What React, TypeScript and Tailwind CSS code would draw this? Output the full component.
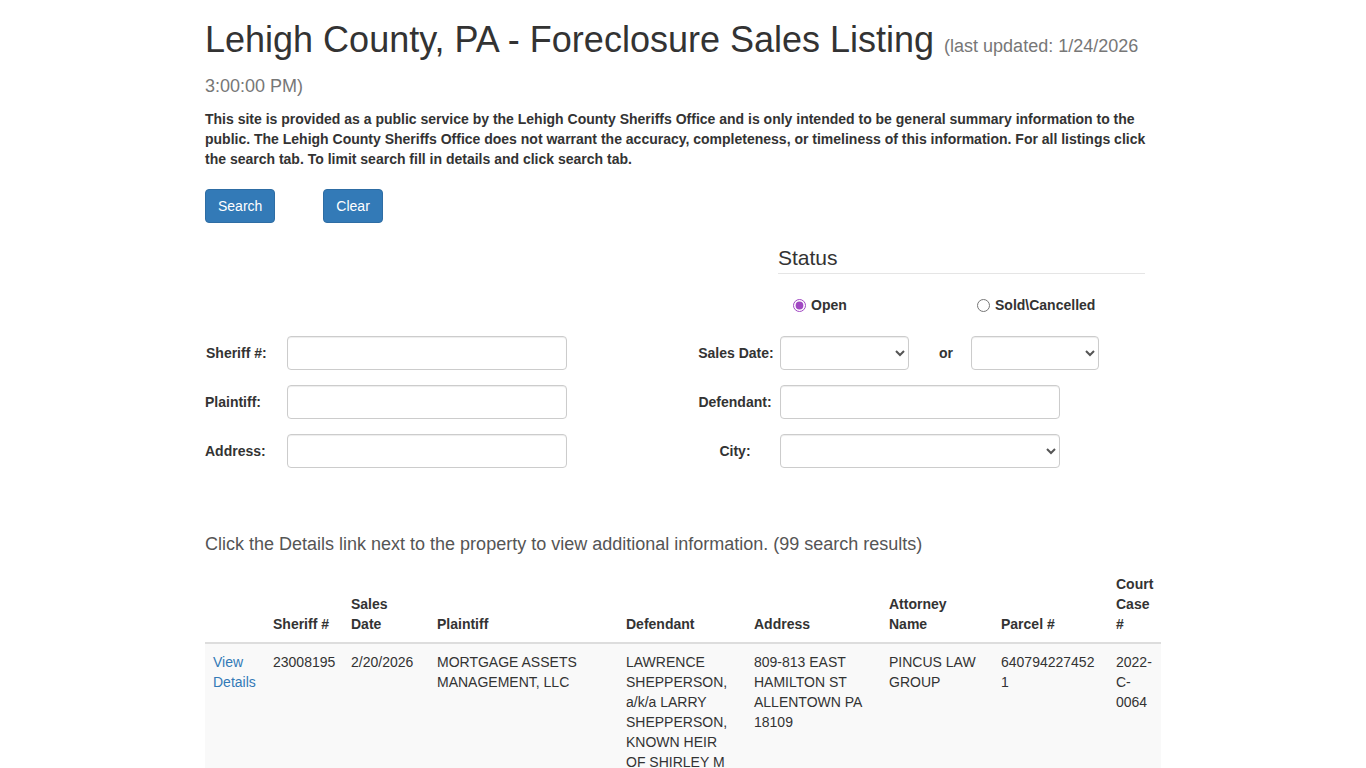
import React from "react";

const inputCls =
  "h-[34px] border border-[#ccc] rounded-[4px] bg-white px-3 text-[14px] text-[#555] shadow-[inset_0_1px_1px_rgba(0,0,0,0.075)] outline-none";

const rows = [
  {
    sheriff: "23008195",
    date: "2/20/2026",
    plaintiff: "MORTGAGE ASSETS MANAGEMENT, LLC",
    defendant:
      "LAWRENCE SHEPPERSON, a/k/a LARRY SHEPPERSON, KNOWN HEIR OF SHIRLEY M SHEPPERSON, DECEASED",
    address: "809-813 EAST HAMILTON ST ALLENTOWN PA 18109",
    attorney: "PINCUS LAW GROUP",
    parcel: "6407942274521",
    court: "2022-C-0064",
  },
  {
    sheriff: "24001102",
    date: "2/20/2026",
    plaintiff: "LAKEVIEW LOAN SERVICING, LLC",
    defendant: "JOHN A SMITH",
    address: "1234 WEST TILGHMAN ST ALLENTOWN PA 18104",
    attorney: "KML LAW GROUP",
    parcel: "5477306512341",
    court: "2024-C-1102",
  },
  {
    sheriff: "24002205",
    date: "2/20/2026",
    plaintiff: "U.S. BANK NATIONAL ASSOCIATION",
    defendant: "MARIA L RODRIGUEZ",
    address: "456 NORTH 7TH ST ALLENTOWN PA 18102",
    attorney: "BROCK & SCOTT, PLLC",
    parcel: "6405930456781",
    court: "2024-C-2205",
  },
];

export default function App() {
  return (
    <div className="min-h-screen bg-white font-['Liberation_Sans',Arial,sans-serif] text-[14px] leading-[20px] text-[#333]">
      <div className="mx-auto w-[956px] pb-10">
        <h1 className="mt-5 mb-2.5 text-[36px] leading-[1.1] font-normal text-[#333]">
          Lehigh County, PA - Foreclosure Sales Listing{" "}
          <small className="text-[18px] text-[#777]">
            (last updated: 1/24/2026 3:00:00 PM)
          </small>
        </h1>
        <p className="mb-5 font-bold">
          This site is provided as a public service by the Lehigh County Sheriffs Office and is only
          intended to be general summary information to the public. The Lehigh County Sheriffs Office
          does not warrant the accuracy, completeness, or timeliness of this information. For all
          listings click the search tab. To limit search fill in details and click search tab.
        </p>

        <div className="flex gap-12">
          <button className="rounded-[4px] border border-[#2e6da4] bg-[#337ab7] px-3 py-1.5 text-[14px] leading-[20px] text-white">
            Search
          </button>
          <button className="rounded-[4px] border border-[#2e6da4] bg-[#337ab7] px-3 py-1.5 text-[14px] leading-[20px] text-white">
            Clear
          </button>
        </div>

        <div className="mt-[20px] ml-[573px] w-[367px]">
          <div className="mb-[21px] border-b border-[#e5e5e5] text-[21px] leading-[30px] text-[#333]">
            Status
          </div>
          <div className="flex items-center font-bold">
            <label className="flex w-[199px] items-center gap-[5px] pl-[15px]">
              <input
                type="radio"
                name="status"
                defaultChecked
                className="m-0 h-[13px] w-[13px] accent-[#a047c2]"
              />
              Open
            </label>
            <label className="flex items-center gap-[5px]">
              <input type="radio" name="status" className="m-0 h-[13px] w-[13px]" />
              Sold\Cancelled
            </label>
          </div>
        </div>

        <div className="mt-[21px] flex flex-col gap-[15px] font-bold">
          <div className="flex h-[34px] items-center">
            <span className="w-[82px] pl-px">Sheriff #:</span>
            <input className={inputCls + " w-[280px]"} />
            <span className="ml-[125px] w-[86px] pl-[2px] text-center">Sales Date:</span>
            <select className={inputCls + " ml-[2px] w-[129px] px-1.5"}>
              <option></option>
            </select>
            <span className="ml-[30px]">or</span>
            <select className={inputCls + " ml-[18px] w-[128px] px-1.5"}>
              <option></option>
            </select>
          </div>
          <div className="flex h-[34px] items-center">
            <span className="w-[82px]">Plaintiff:</span>
            <input className={inputCls + " w-[280px]"} />
            <span className="ml-[125px] w-[86px] text-center">Defendant:</span>
            <input className={inputCls + " ml-[2px] w-[280px]"} />
          </div>
          <div className="flex h-[34px] items-center">
            <span className="w-[82px]">Address:</span>
            <input className={inputCls + " w-[280px]"} />
            <span className="ml-[125px] w-[86px] text-center">City:</span>
            <select className={inputCls + " ml-[2px] w-[280px] px-1.5"}>
              <option></option>
            </select>
          </div>
        </div>

        <p className="mt-[66px] text-[18px] leading-[20px] text-[#555]">
          Click the Details link next to the property to view additional information. (99 search
          results)
        </p>

        <table className="mt-3 w-full table-fixed border-collapse text-left">
          <colgroup>
            <col className="w-[60px]" />
            <col className="w-[78px]" />
            <col className="w-[86px]" />
            <col className="w-[189px]" />
            <col className="w-[128px]" />
            <col className="w-[135px]" />
            <col className="w-[112px]" />
            <col className="w-[115px]" />
            <col className="w-[53px]" />
          </colgroup>
          <thead>
            <tr className="align-bottom">
              <th className="border-b-2 border-[#ddd] p-2 font-bold"></th>
              <th className="border-b-2 border-[#ddd] p-2 font-bold">Sheriff #</th>
              <th className="border-b-2 border-[#ddd] p-2 font-bold">Sales Date</th>
              <th className="border-b-2 border-[#ddd] p-2 font-bold">Plaintiff</th>
              <th className="border-b-2 border-[#ddd] p-2 font-bold">Defendant</th>
              <th className="border-b-2 border-[#ddd] p-2 font-bold">Address</th>
              <th className="border-b-2 border-[#ddd] p-2 font-bold">Attorney Name</th>
              <th className="border-b-2 border-[#ddd] p-2 font-bold">Parcel #</th>
              <th className="border-b-2 border-[#ddd] p-2 font-bold">Court Case #</th>
            </tr>
          </thead>
          <tbody>
            {rows.map((r, i) => (
              <tr key={r.sheriff} className={"align-top " + (i % 2 === 0 ? "bg-[#f9f9f9]" : "bg-white")}>
                <td className="border-t border-[#ddd] p-2">
                  <a href="#" className="text-[#337ab7]">
                    View Details
                  </a>
                </td>
                <td className="border-t border-[#ddd] p-2">{r.sheriff}</td>
                <td className="border-t border-[#ddd] p-2">{r.date}</td>
                <td className="border-t border-[#ddd] p-2">{r.plaintiff}</td>
                <td className="border-t border-[#ddd] p-2">{r.defendant}</td>
                <td className="border-t border-[#ddd] p-2">{r.address}</td>
                <td className="border-t border-[#ddd] p-2">{r.attorney}</td>
                <td className="border-t border-[#ddd] p-2 break-all">{r.parcel}</td>
                <td className="border-t border-[#ddd] p-2">{r.court}</td>
              </tr>
            ))}
          </tbody>
        </table>
      </div>
    </div>
  );
}
